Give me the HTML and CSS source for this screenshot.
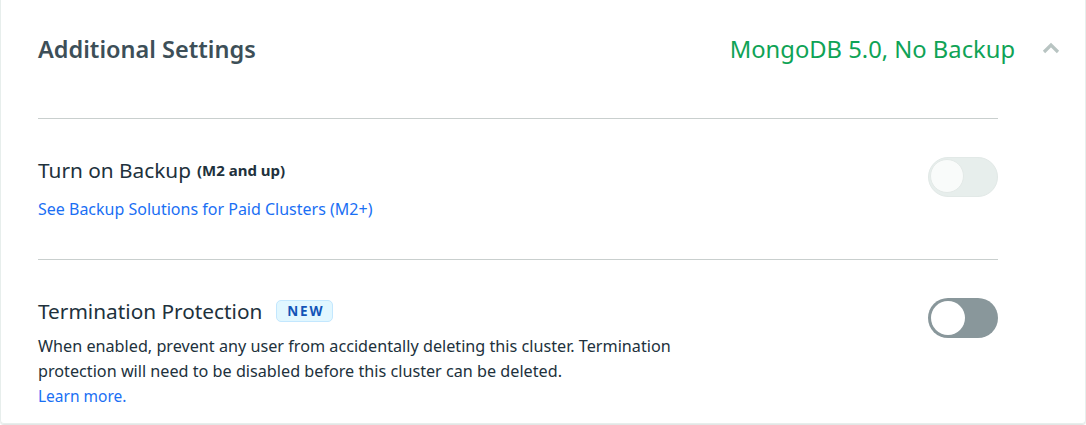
FILE: index.html
```html
<!DOCTYPE html>
<html>
<head>
<meta charset="utf-8">
<link rel="stylesheet" href="styles.css">
</head>
<body>
<div class="card">
  <div class="header">
    <h2 class="title">Additional Settings</h2>
    <div class="summary">
      <span class="summary-text">MongoDB 5.0, No Backup</span>
      <svg class="chevron" width="18" height="12" viewBox="0 0 18 12"><path d="M2 10 L9 3 L16 10" fill="none" stroke="#b8c4c2" stroke-width="3.2"/></svg>
    </div>
  </div>
  <div class="body">
    <div class="row">
      <div class="row-main">
        <div class="row-title">Turn on Backup <span class="small-bold">(M2 and up)</span></div>
        <a class="link link-backup" href="#">See Backup Solutions for Paid Clusters (M2+)</a>
      </div>
      <div class="toggle toggle-disabled"><span class="knob"></span></div>
    </div>
    <div class="row">
      <div class="row-main">
        <div class="row-title">Termination Protection <span class="badge">NEW</span></div>
        <p class="desc">When enabled, prevent any user from accidentally deleting this cluster. Termination protection will need to be disabled before this cluster can be deleted. <br><a class="link" href="#">Learn more.</a></p>
      </div>
      <div class="toggle toggle-off"><span class="knob"></span></div>
    </div>
  </div>
</div>
</body>
</html>
```
FILE: styles.css
```css
html, body { margin: 0; padding: 0; background: #fff; }
body { font-family: "Noto Sans", "Lato", sans-serif; color: #21313c; width: 1086px; height: 425px; overflow: hidden; }
.card {
  box-sizing: border-box;
  width: 1086px;
  height: 424px;
  border: 1px solid #e7eeec;
  border-top: none;
  border-radius: 0 0 4px 4px;
  box-shadow: 0 1px 1px #e0e4e3;
  padding: 0 87px 0 37px;
}
.header { display: flex; align-items: center; justify-content: space-between; border-bottom: 1px solid #c9cfce; box-sizing: border-box; height: 119px; padding-bottom: 21px; }
.title { margin: 0; font-size: 23.5px; font-weight: 600; color: #3d4f58; }
.summary { display: flex; align-items: center; margin-right: -62px; }
.summary-text { font-size: 23.75px; color: #0fa356; }
.chevron { margin-left: 27px; margin-top: -2px; }
.row { display: flex; justify-content: space-between; align-items: flex-start; border-bottom: 1px solid #c9cfce; }
.row:last-child { border-bottom: none; }
.row:first-child { height: 141px; padding-top: 38px; box-sizing: border-box; }
.row:last-child { padding-top: 38px; }
.row-title { font-size: 20.8px; line-height: 26px; color: #21313c; display: flex; align-items: center; }
.small-bold { font-size: 15px; font-weight: 700; margin-left: 6px; }
.link { color: #1a6ff4; text-decoration: none; font-size: 16px; }
.link-backup { display: block; margin-top: 15px; }
.badge { font-size: 13.5px; font-weight: 700; letter-spacing: 1.8px; color: #1254b7; background: #e1f7ff; border: 1px solid #c3e7fe; border-radius: 5px; padding: 0 8px 0 10px; line-height: 20px; margin-left: 14px; }
.desc { margin: 10px 0 0; font-size: 16.2px; line-height: 25px; width: 690px; color: #21313c; }
.desc .link { font-size: 15.5px; }
.toggle { width: 70px; height: 40px; border-radius: 20px; box-sizing: border-box; position: relative; flex: none; }
.toggle .knob { position: absolute; width: 34px; height: 34px; border-radius: 50%; box-sizing: border-box; }
.toggle-disabled { background: #e7eeec; border: 1px solid #e2e9e7; }
.toggle-disabled .knob { background: #f9fbfa; border: 1px solid #e3e9e7; top: 1px; left: 1px; }
.toggle-off { background: #89979b; }
.toggle-off .knob { background: #fff; top: 3px; left: 3px; }
```
